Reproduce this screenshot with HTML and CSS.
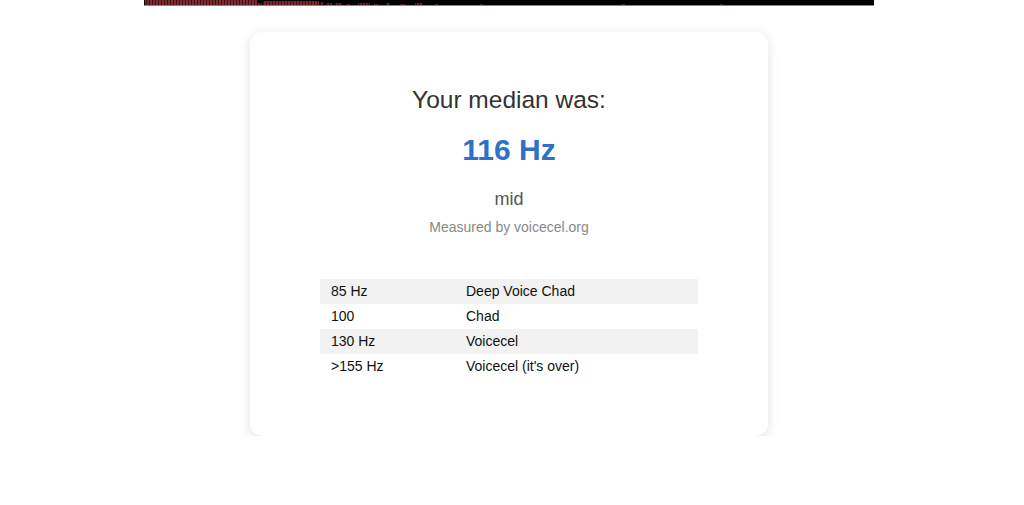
FILE: index.html
```html
<!DOCTYPE html>
<html>
<head>
<meta charset="utf-8">
<link rel="stylesheet" href="styles.css">
</head>
<body>
<div class="page">
  <div class="spectro">
    <svg width="730" height="6" viewBox="0 0 730 6">
      <defs>
        <pattern id="stripe" width="3" height="6" patternUnits="userSpaceOnUse">
          <rect x="0" y="0" width="2" height="6" fill="#7c2b31"/>
          <rect x="2" y="0" width="1" height="6" fill="#3a1416"/>
        </pattern>
        <pattern id="stripe2" width="3" height="6" patternUnits="userSpaceOnUse">
          <rect x="0" y="0" width="2" height="6" fill="#5e2428"/>
          <rect x="2" y="0" width="1" height="6" fill="#1e0a0c"/>
        </pattern>
      </defs>
      <rect x="0" y="0" width="730" height="6" fill="#000"/>
      <rect x="0" y="5" width="730" height="1" fill="#888"/>
      <rect x="1" y="0" width="112" height="5" fill="url(#stripe)"/>
      <rect x="114" y="3" width="4" height="2" fill="url(#stripe2)"/>
      <rect x="119" y="1" width="56" height="4" fill="url(#stripe)"/>
      <rect x="176" y="2" width="4" height="3" fill="url(#stripe2)"/>
      <rect x="182" y="3" width="6" height="2" fill="url(#stripe2)"/>
      <rect x="191" y="3" width="7" height="2" fill="url(#stripe2)"/>
      <rect x="203" y="4" width="3" height="1" fill="#5a2226"/>
      <rect x="214" y="3" width="12" height="2" fill="url(#stripe2)"/>
      <rect x="230" y="4" width="4" height="1" fill="#5a2226"/>
      <rect x="242" y="3" width="4" height="2" fill="url(#stripe2)"/>
      <rect x="256" y="4" width="6" height="1" fill="#4a1e22"/>
      <rect x="271" y="3" width="8" height="2" fill="url(#stripe2)"/>
      <rect x="291" y="4" width="3" height="1" fill="#4a1e22"/>
      <rect x="336" y="4" width="3" height="1" fill="#4a1e22"/>
      <rect x="478" y="4" width="3" height="1" fill="#4a1e22"/>
      <rect x="576" y="4" width="3" height="1" fill="#4a1e22"/>
    </svg>
  </div>
  <div class="card">
    <h2 class="title">Your median was:</h2>
    <div class="value">116 Hz</div>
    <div class="label">mid</div>
    <div class="credit">Measured by voicecel.org</div>
    <table class="chart">
      <tr><td>85 Hz</td><td>Deep Voice Chad</td></tr>
      <tr><td>100</td><td>Chad</td></tr>
      <tr><td>130 Hz</td><td>Voicecel</td></tr>
      <tr><td>&gt;155 Hz</td><td>Voicecel (it's over)</td></tr>
    </table>
  </div>
</div>
</body>
</html>
```
FILE: styles.css
```css
html, body {
  margin: 0;
  padding: 0;
  background: #fff;
}
body {
  font-family: "Liberation Sans", Arial, sans-serif;
  color: #222;
}
.page {
  width: 1018px;
  display: flex;
  flex-direction: column;
  align-items: center;
}
.spectro {
  width: 730px;
  height: 6px;
  line-height: 0;
}
.spectro svg {
  display: block;
}
.card {
  margin-top: 26px;
  width: 518px;
  box-sizing: border-box;
  padding: 54px 70px 57px;
  background: #fff;
  border-radius: 12px;
  box-shadow: 0 3px 12px rgba(0, 0, 0, 0.12);
  display: flex;
  flex-direction: column;
  align-items: center;
}
.title {
  margin: 0;
  font-size: 24.5px;
  font-weight: normal;
  color: #333;
  line-height: 28px;
}
.value {
  margin-top: 19px;
  font-size: 30px;
  font-weight: bold;
  color: #3170c8;
  line-height: 34px;
}
.label {
  margin-top: 21px;
  font-size: 18px;
  color: #555;
  line-height: 22px;
}
.credit {
  margin-top: 8px;
  font-size: 14px;
  color: #888;
  line-height: 18px;
}
.chart {
  margin-top: 43px;
  width: 378px;
  border-collapse: collapse;
  font-size: 14px;
  color: #111;
}
.chart td {
  padding: 4px 11px;
  height: 17px;
  line-height: 17px;
}
.chart td:first-child {
  width: 113px;
}
.chart tr:nth-child(odd) td {
  background: #f2f2f2;
}
```
